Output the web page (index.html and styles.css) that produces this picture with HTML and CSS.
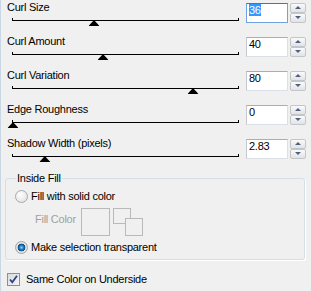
FILE: index.html
```html
<!DOCTYPE html>
<html lang="en">
<head>
    <meta charset="UTF-8">
    <title>Page Curl</title>
    <link rel="stylesheet" href="styles.css">
</head>
<body>
    <div class="panel">
        <div class="row">
            <div class="slider">
                <div class="label">Curl Size</div>
                <div class="track"><span class="thumb" style="left: 36%"></span></div>
            </div>
            <div class="field focused"><span class="sel">36</span></div>
            <div class="spin"><span class="up"></span><span class="down"></span></div>
        </div>
        <div class="row">
            <div class="slider">
                <div class="label">Curl Amount</div>
                <div class="track"><span class="thumb" style="left: 40%"></span></div>
            </div>
            <div class="field">40</div>
            <div class="spin"><span class="up"></span><span class="down"></span></div>
        </div>
        <div class="row">
            <div class="slider">
                <div class="label">Curl Variation</div>
                <div class="track"><span class="thumb" style="left: 80%"></span></div>
            </div>
            <div class="field">80</div>
            <div class="spin"><span class="up"></span><span class="down"></span></div>
        </div>
        <div class="row">
            <div class="slider">
                <div class="label">Edge Roughness</div>
                <div class="track"><span class="thumb" style="left: 0%"></span></div>
            </div>
            <div class="field">0</div>
            <div class="spin"><span class="up"></span><span class="down"></span></div>
        </div>
        <div class="row">
            <div class="slider">
                <div class="label">Shadow Width (pixels)</div>
                <div class="track"><span class="thumb" style="left: 14.15%"></span></div>
            </div>
            <div class="field">2.83</div>
            <div class="spin"><span class="up"></span><span class="down"></span></div>
        </div>

        <!-- Inside fill group -->
        <fieldset class="group">
            <legend>Inside Fill</legend>
            <div class="option"><span class="radio"></span>Fill with solid color</div>
            <div class="color-row">
                <span class="muted">Fill Color</span>
                <span class="swatch"></span>
                <span class="pair"><span class="sq back"></span><span class="sq front"></span></span>
            </div>
            <div class="option"><span class="radio checked"></span>Make selection transparent</div>
        </fieldset>

        <div class="check-row">
            <span class="check">
                <svg width="11" height="11" viewBox="0 0 11 11"><path d="M2 5.5 L4.3 8.3 L9 1.8" fill="none" stroke="#2c4487" stroke-width="1.8"/></svg>
            </span>
            Same Color on Underside
        </div>
    </div>
</body>
</html>
```

FILE: styles.css
```css
/* Page curl settings panel */
body {
    margin: 0;
    background-color: #f0f0f0;
    font-family: "Liberation Sans", Arial, sans-serif;
    font-size: 11px;
    letter-spacing: -0.25px;
    line-height: 13px;
    color: #000;
}

.panel {
    height: 291px;
    padding-top: 1px;
    box-sizing: border-box;
    border-left: 1px solid #c9d7e5;
}

.row {
    display: grid;
    grid-template-columns: 1fr 42px 16px;
    column-gap: 2px;
    padding-right: 5px;
    height: 34px;
}

.label {
    padding-left: 6px;
}

.track {
    position: relative;
    height: 2px;
    margin: 4px 5px 0 11px;
    border: 1px solid #000;
    border-top: none;
}

.thumb {
    position: absolute;
    top: 2px;
    width: 11px;
    height: 6px;
    background-color: #000;
    transform: translateX(-50%);
    clip-path: polygon(50% 0, 100% 100%, 0 100%);
}

.field {
    margin-top: 2px;
    height: 20px;
    box-sizing: border-box;
    padding: 0 2px;
    background-color: #fff;
    border: 1px solid #dbdfe6;
    border-top-color: #abadb3;
    border-left-color: #c5c9d0;
}

.field.focused {
    border-color: #6fa4dc;
    border-top-color: #3d7bad;
}

.sel {
    background-color: #3399ff;
    color: #fff;
}

.spin {
    display: flex;
    flex-direction: column;
    gap: 0;
    margin-top: 2px;
}

.spin span {
    position: relative;
    height: 10px;
    box-sizing: border-box;
    border: 1px solid #c2c5ca;
    border-radius: 2px;
    background: linear-gradient(#fafafa, #e3e3e3);
}

.spin span::after {
    content: "";
    position: absolute;
    left: 4px;
    top: 2px;
    border-left: 3px solid transparent;
    border-right: 3px solid transparent;
}

.spin .up::after {
    border-bottom: 3px solid #4d6185;
}

.spin .down::after {
    border-top: 3px solid #4d6185;
}

.group {
    margin: 1px 6px 0 4px;
    padding: 3px 0 4px 9px;
    border: 1px solid #d5dfe5;
    border-radius: 3px;
    box-shadow: 1px 1px 0 #fff;
}

.group legend {
    margin-left: 1px;
    padding: 0 1px;
}

.option {
    display: flex;
    align-items: center;
    gap: 3px;
    height: 16px;
}

.radio {
    width: 13px;
    height: 13px;
    box-sizing: border-box;
    border: 1px solid #a5a9ae;
    border-radius: 50%;
    background: radial-gradient(circle at 40% 35%, #ffffff, #dcdcdc);
}

.radio.checked {
    background: radial-gradient(circle, #8fd3f8 0, #1b77bf 2.2px, #0d4f8a 3.6px, #e9e9e9 4.2px, #d4d4d4 6px);
}

.color-row {
    display: flex;
    align-items: flex-start;
    margin-top: 4px;
    padding-left: 20px;
    height: 28px;
}

.muted {
    color: #a0a0a0;
    margin-top: 5px;
    width: 46px;
}

.swatch {
    width: 29px;
    height: 28px;
    box-sizing: border-box;
    border: 1px solid #b9b9b9;
}

.pair {
    position: relative;
    width: 31px;
    height: 28px;
    margin-left: 3px;
}

.sq {
    position: absolute;
    box-sizing: border-box;
    border: 1px solid #b9b9b9;
    background-color: #f0f0f0;
}

.sq.back {
    left: 0;
    top: 0;
    width: 18px;
    height: 16px;
}

.sq.front {
    left: 12px;
    top: 10px;
    width: 18px;
    height: 18px;
}

.color-row + .option {
    margin-top: 3px;
}

.check-row {
    display: flex;
    align-items: center;
    gap: 6px;
    margin-top: 11px;
    padding-left: 6px;
    height: 16px;
}

.check {
    display: flex;
    align-items: center;
    justify-content: center;
    width: 13px;
    height: 13px;
    box-sizing: border-box;
    border: 1px solid #8e8f8f;
    background: linear-gradient(135deg, #d9dadc, #f6f6f6);
}
```
